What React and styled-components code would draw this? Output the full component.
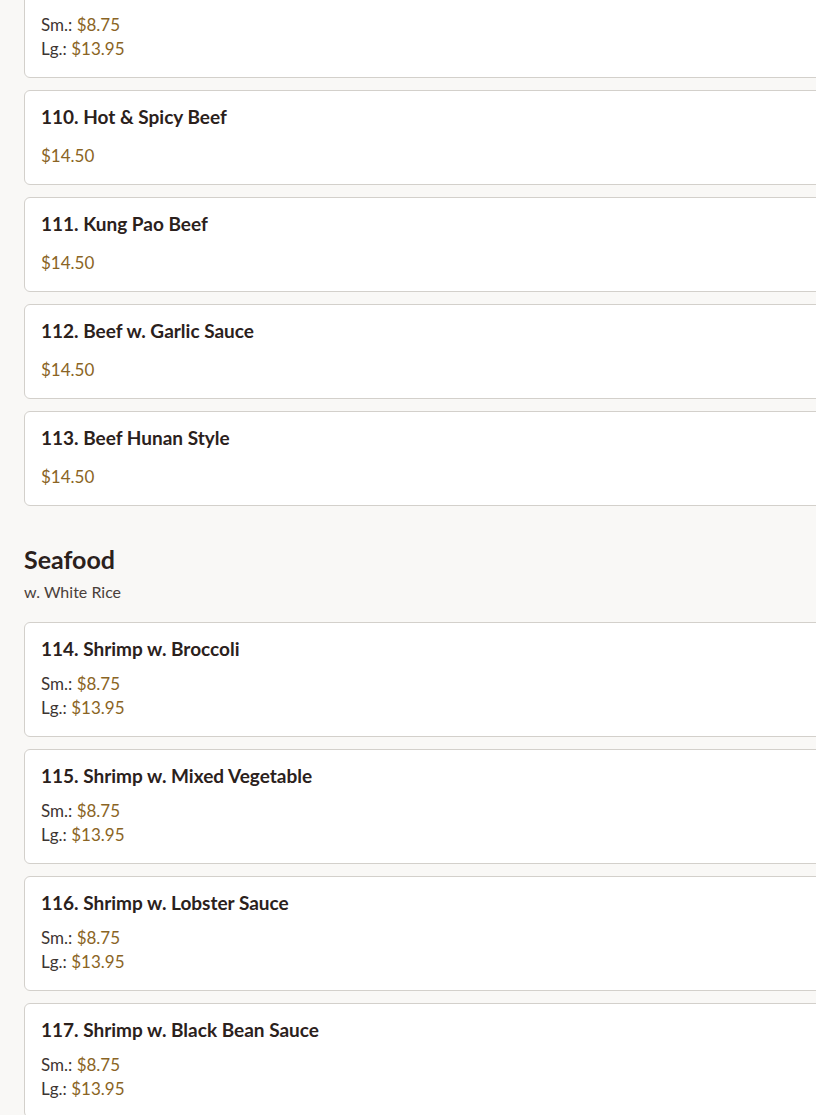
import React from 'react';
import styled, { createGlobalStyle } from 'styled-components';

const GlobalStyle = createGlobalStyle`
  html, body {
    margin: 0;
    padding: 0;
    background: #f9f8f6;
    overflow: hidden;
  }
  body {
    font-family: Lato, "Noto Sans", sans-serif;
    color: #2b211c;
  }
`;

const Page = styled.div`
  width: 1100px;
  padding: 0 24px;
  margin-top: -37px;
`;

const Section = styled.section`
  & + & {
    margin-top: 37px;
  }
`;

const SectionTitle = styled.h2`
  margin: 0;
  font-size: 25px;
  line-height: 32px;
  font-weight: 700;
  color: #2b211c;
`;

const SectionNote = styled.div`
  margin-top: 6px;
  margin-bottom: 19px;
  font-size: 16px;
  line-height: 22px;
  color: #4a403a;
`;

const ItemList = styled.div`
  display: flex;
  flex-direction: column;
  gap: 12px;
`;

const Card = styled.div`
  background: #fff;
  border: 1px solid #d3d0cb;
  border-radius: 6px;
  padding: 16px;
`;

const ItemName = styled.div`
  font-size: 19px;
  line-height: 19px;
  font-weight: 700;
  color: #2b211c;
`;

const Prices = styled.div`
  margin-top: ${(p) => (p.$single ? '18px' : '14px')};
  font-size: 17px;
  line-height: 24px;
`;

const Label = styled.span`
  color: #3d3532;
`;

const Amount = styled.span`
  color: #8a6424;
`;

const beef = [
  { name: '109. Beef w. Broccoli', sizes: true },
  { name: '110. Hot & Spicy Beef', price: '$14.50' },
  { name: '111. Kung Pao Beef', price: '$14.50' },
  { name: '112. Beef w. Garlic Sauce', price: '$14.50' },
  { name: '113. Beef Hunan Style', price: '$14.50' },
];

const seafood = [
  { name: '114. Shrimp w. Broccoli', sizes: true },
  { name: '115. Shrimp w. Mixed Vegetable', sizes: true },
  { name: '116. Shrimp w. Lobster Sauce', sizes: true },
  { name: '117. Shrimp w. Black Bean Sauce', sizes: true },
];

function MenuItem({ item }) {
  return (
    <Card>
      <ItemName>{item.name}</ItemName>
      {item.sizes ? (
        <Prices>
          <div><Label>Sm.: </Label><Amount>$8.75</Amount></div>
          <div><Label>Lg.: </Label><Amount>$13.95</Amount></div>
        </Prices>
      ) : (
        <Prices $single>
          <Amount>{item.price}</Amount>
        </Prices>
      )}
    </Card>
  );
}

export default function App() {
  return (
    <>
      <GlobalStyle />
      <Page>
        <Section>
          <ItemList>
            {beef.map((item) => <MenuItem key={item.name} item={item} />)}
          </ItemList>
        </Section>
        <Section>
          <SectionTitle>Seafood</SectionTitle>
          <SectionNote>w. White Rice</SectionNote>
          <ItemList>
            {seafood.map((item) => <MenuItem key={item.name} item={item} />)}
          </ItemList>
        </Section>
      </Page>
    </>
  );
}
